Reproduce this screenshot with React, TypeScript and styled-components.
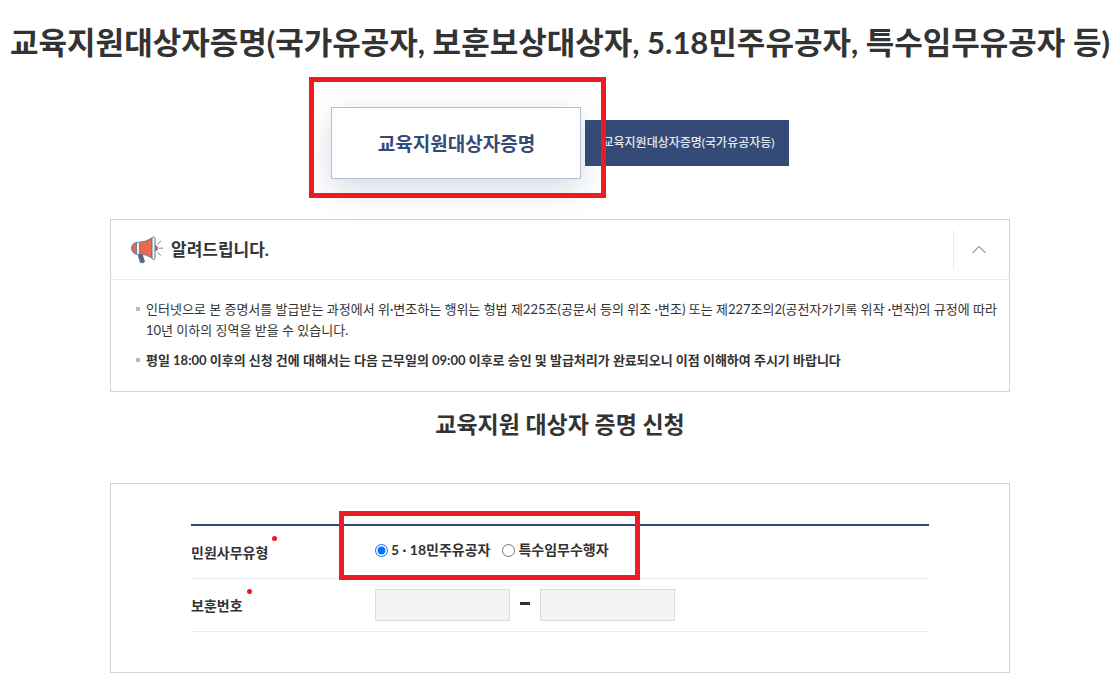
import React from "react";
import styled, { createGlobalStyle, css } from "styled-components";

const GlobalStyle = createGlobalStyle`
  * { box-sizing: border-box; }
  body {
    margin: 0;
    background: #fff;
    color: #333;
    font-family: Lato, "Noto Sans CJK KR", sans-serif;
    font-size: 14px;
    line-height: 21px;
    word-break: keep-all;
  }
  h1, h2, h3, p, ul { margin: 0; padding: 0; }
  button, input { font: inherit; }
`;

const Page = styled.main`
  display: flex;
  flex-direction: column;
  align-items: center;
  padding: 19px 8px 16px;
`;

const PageTitle = styled.h1`
  font-size: 31px;
  line-height: 46px;
  font-weight: 700;
  text-align: center;
`;

const Tabs = styled.nav`
  display: flex;
  align-items: center;
  gap: 4px;
  margin-top: 42px;
`;

const Marked = styled.div`
  position: relative;
`;

const Highlight = styled.span<{ $inset: string }>`
  position: absolute;
  inset: ${(p) => p.$inset};
  border: 5px solid #ed1c24;
  pointer-events: none;
  z-index: 2;
`;

const Tab = styled.button<{ $active?: boolean }>`
  display: block;
  border: 0;
  cursor: pointer;
  ${(p) =>
    p.$active
      ? css`
          width: 250px;
          height: 72px;
          border: 1px solid #b4bdd6;
          background: #fff;
          color: #344b78;
          font-size: 19px;
          font-weight: 700;
          box-shadow: 0 10px 30px rgba(52, 75, 120, 0.2);
        `
      : css`
          position: relative;
          height: 46px;
          padding: 0 14px 2px 17px;
          background: #344b78;
          color: #e4e8f0;
          font-size: 12px;
          font-weight: 500;
        `}
`;

const Panel = styled.section`
  width: 100%;
  max-width: 900px;
  border: 1px solid #d2d2d2;
`;

const Notice = styled(Panel)`
  margin-top: 40px;
`;

const NoticeHead = styled.header`
  display: flex;
  align-items: center;
  height: 60px;
  padding-left: 20px;
  border-bottom: 1px solid #ebebeb;
`;

const NoticeTitle = styled.h2`
  flex: 1;
  margin-left: 8px;
  font-size: 17px;
  font-weight: 700;
`;

const Toggle = styled.button`
  display: flex;
  align-items: center;
  justify-content: center;
  width: 56px;
  height: 40px;
  padding: 0 6px 0 0;
  border: 0;
  border-left: 1px solid #ebebeb;
  background: none;
  cursor: pointer;
`;

const NoticeList = styled.ul`
  display: flex;
  flex-direction: column;
  gap: 9px;
  padding: 19px 4px 20px 25px;
  list-style: none;
`;

const NoticeItem = styled.li<{ $strong?: boolean }>`
  display: flex;
  font-size: 13px;
  font-weight: ${(p) => (p.$strong ? 700 : 400)};

  &::before {
    content: "";
    flex: none;
    width: 4px;
    height: 4px;
    margin: 8px 6px 0 0;
    background: #bbb;
  }
`;

const FormTitle = styled.h2`
  margin: 15px 0 42px;
  font-size: 23px;
  line-height: 34px;
  font-weight: 700;
`;

const FormPanel = styled(Panel)`
  padding: 40px 80px;
`;

const Rows = styled.form`
  border-top: 2px solid #2f477a;
`;

const Row = styled.div`
  display: flex;
  align-items: center;
  height: 53px;
  border-bottom: 1px solid #ebebeb;
  font-weight: 700;
`;

const RowLabel = styled.span`
  display: flex;
  width: 184px;
  gap: 4px;
`;

const Required = styled.i`
  width: 5px;
  height: 5px;
  margin-top: -6px;
  border-radius: 50%;
  background: #f5141c;
`;

const Radios = styled(Marked)`
  display: flex;
  gap: 12px;
  padding-bottom: 5px;
`;

const Choice = styled.label`
  display: flex;
  align-items: center;
  gap: 3px;
`;

const Radio = styled.input`
  width: 13px;
  height: 13px;
  margin: 2px 0 0;
`;

const NumberFields = styled.div`
  display: flex;
  align-items: center;
  gap: 10px;
`;

const NumberInput = styled.input`
  width: 135px;
  height: 32px;
  padding: 0 8px;
  border: 1px solid #dcdcdc;
  background: #f4f4f4;
`;

const Dash = styled.span`
  width: 10px;
  height: 3px;
  margin-bottom: 4px;
  background: #333;
`;

const Megaphone = () => (
  <svg width="32" height="28" viewBox="0 0 32 28" aria-hidden="true">
    <path d="M7 18.5h4.2l2.3 7.3q-2 1.6-4 .6z" fill="#52657a" stroke="#606c86" strokeLinejoin="round" />
    <path d="M5.5 6.5H4.6Q.6 7.8.6 12.2t4 5.8h.9z" fill="#e8694c" stroke="#6b7490" />
    <path d="M8.5 6.3Q15 6 21 2v20q-6-4-12.5-4z" fill="#e8694c" stroke="#6b7490" />
    <rect x="5.5" y="6.3" width="3" height="12" fill="#eef1f7" stroke="#6b7490" strokeWidth="0.8" />
    <path d="M24 9.8q2.6 0 2.6 2.4T24 14.6z" fill="#e8694c" stroke="#6b7490" />
    <rect x="21" y="1" width="3" height="22.5" rx="1.5" fill="#f6f7fa" stroke="#6b7490" />
    <path d="M28 12.2h3.6M26.8 8l3-3M26.8 16.4l3 3" stroke="#7b849a" strokeLinecap="round" />
  </svg>
);

export default function App() {
  return (
    <>
      <GlobalStyle />
      <Page>
        <PageTitle>
          교육지원대상자증명(국가유공자, 보훈보상대상자, 5.18민주유공자, 특수임무유공자 등)
        </PageTitle>

        <Tabs aria-label="증명 종류">
          <Marked>
            <Tab type="button" $active>교육지원대상자증명</Tab>
            <Highlight $inset="-30px -25px -19px -22px" />
          </Marked>
          <Tab type="button">교육지원대상자증명(국가유공자등)</Tab>
        </Tabs>

        <Notice>
          <NoticeHead>
            <Megaphone />
            <NoticeTitle>알려드립니다.</NoticeTitle>
            <Toggle type="button" aria-label="접기" aria-expanded="true">
              <svg width="14" height="9" viewBox="0 0 14 9" aria-hidden="true">
                <path d="M0.5 8 7 1.5l6.5 6.5" fill="none" stroke="#555" />
              </svg>
            </Toggle>
          </NoticeHead>
          <NoticeList>
            <NoticeItem>
              인터넷으로 본 증명서를 발급받는 과정에서 위·변조하는 행위는 형법 제225조(공문서 등의 위조 ·변조) 또는 제227조의2(공전자가기록 위작 ·변작)의 규정에 따라 10년 이하의 징역을 받을 수 있습니다.
            </NoticeItem>
            <NoticeItem $strong>
              평일 18:00 이후의 신청 건에 대해서는 다음 근무일의 09:00 이후로 승인 및 발급처리가 완료되오니 이점 이해하여 주시기 바랍니다
            </NoticeItem>
          </NoticeList>
        </Notice>

        <FormTitle>교육지원 대상자 증명 신청</FormTitle>

        <FormPanel>
          <Rows>
            <Row role="radiogroup" aria-labelledby="kind">
              <RowLabel id="kind">민원사무유형<Required /></RowLabel>
              <Radios>
                <Choice><Radio type="radio" name="kind" defaultChecked />5 · 18민주유공자</Choice>
                <Choice><Radio type="radio" name="kind" />특수임무수행자</Choice>
                <Highlight $inset="-28px -31px -15px -36px" />
              </Radios>
            </Row>
            <Row>
              <RowLabel as="label" htmlFor="number">보훈번호<Required /></RowLabel>
              <NumberFields>
                <NumberInput id="number" disabled />
                <Dash />
                <NumberInput aria-label="보훈번호 뒷자리" disabled />
              </NumberFields>
            </Row>
          </Rows>
        </FormPanel>
      </Page>
    </>
  );
}
